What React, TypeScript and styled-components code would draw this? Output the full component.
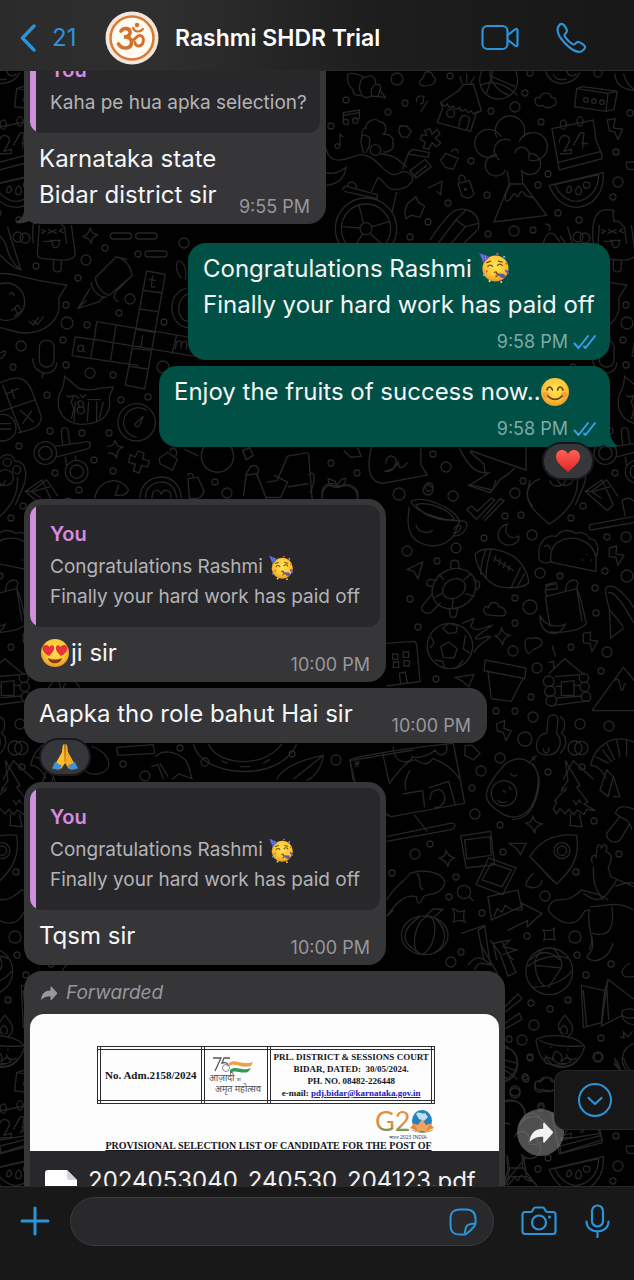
import React, { useLayoutEffect, useRef } from "react";
import styled, { createGlobalStyle, css } from "styled-components";

const blue = "#2d93d9";
const sans = `Inter, "Liberation Sans", sans-serif`;
const serif = `"Liberation Serif", serif`;

const GlobalStyle = createGlobalStyle`
  *, *::before, *::after { box-sizing: border-box; }
  html, body { margin: 0; padding: 0; background: #010101; }
  body { font-family: ${sans}; color: #f4f4f6; }
  button { border: 0; padding: 0; background: none; color: inherit; font: inherit; cursor: pointer; }
  svg { display: block; flex: none; }
`;

const Screen = styled.div`
  display: flex;
  flex-direction: column;
  height: 100vh;
  overflow: hidden;
`;

/* ---------- header ---------- */

const Header = styled.header`
  display: flex;
  align-items: center;
  flex: none;
  height: 71px;
  padding: 6px 47px 0 20px;
  background: linear-gradient(90deg, #2b2b2b 0%, #2f2f2f 25%, #1d1d1d 60%, #171717 100%);
  border-bottom: 1px solid #2a2a2a;
`;

const BackButton = styled.button`
  display: flex;
  align-items: center;
  gap: 16px;
  width: 85px;
  color: ${blue};
  font-size: 24px;
  line-height: 30px;
`;

const ContactName = styled.h1`
  flex: 1;
  min-width: 0;
  margin: 0 0 0 16px;
  color: #fff;
  font-size: 23px;
  font-weight: 600;
  line-height: 30px;
  white-space: nowrap;
`;

const HeaderActions = styled.div`
  display: flex;
  align-items: center;
  gap: 36px;
  color: ${blue};
`;

/* ---------- conversation ---------- */

const Conversation = styled.main`
  position: relative;
  flex: 1;
  min-height: 0;
`;

const WallpaperLayer = styled.div`
  position: absolute;
  inset: 0;
  overflow: hidden;
  background: #010101;
`;

const ThreadScroller = styled.div`
  position: relative;
  height: 100%;
  overflow-y: auto;
  scrollbar-width: none;
  &::-webkit-scrollbar { display: none; }
`;

const Thread = styled.div`
  display: flex;
  flex-direction: column;
  gap: 6px;
  padding: 12px 24px 16px;
`;

const Bubble = styled.article<{ $out?: boolean; $width: number; $space?: number }>`
  position: relative;
  width: min(${(p) => p.$width}px, 100%);
  margin-top: ${(p) => p.$space ?? 0}px;
  align-self: ${(p) => (p.$out ? "flex-end" : "flex-start")};
  background: ${(p) => (p.$out ? "#015045" : "#363638")};
  border-radius: 18px;
`;

const Quote = styled.blockquote`
  position: relative;
  margin: 0;
  padding: 14px 16px 15px 20px;
  overflow: hidden;
  border-radius: 12px;
  background: #28282a;
  color: #b3b3b7;
  font-size: 19px;
  line-height: 30px;
  white-space: nowrap;
  &::before {
    content: "";
    position: absolute;
    inset: 0 auto 0 0;
    width: 6px;
    background: #cf8fdc;
  }
`;

const QuoteFrame = styled.div`
  padding: 6px 6px 0;
`;

const QuoteAuthor = styled.strong`
  display: block;
  margin-bottom: 3px;
  color: #d88ae0;
  font-size: 20px;
  font-weight: 600;
`;

const Line = styled.span`
  display: flex;
  align-items: center;
  gap: 6px;
`;

const Body = styled.div<{ $out?: boolean }>`
  display: flex;
  flex-direction: ${(p) => (p.$out ? "column" : "row")};
  align-items: ${(p) => (p.$out ? "stretch" : "flex-end")};
  justify-content: space-between;
  padding: 8px 16px ${(p) => (p.$out ? 6 : 5)}px 15px;
`;

const Text = styled.p`
  margin: 0 0 6px;
  color: #f5f5f7;
  font-size: 24px;
  line-height: 36px;
  white-space: nowrap;
`;

const Meta = styled.div<{ $out?: boolean }>`
  display: flex;
  align-items: center;
  justify-content: flex-end;
  gap: 5px;
  color: ${(p) => (p.$out ? "#7fa9a1" : "#97979c")};
  font-size: 18px;
  line-height: 24px;
  white-space: nowrap;
  ${(p) => p.$out && css`margin: 1px -3px 0 0;`}
`;

const Reaction = styled.button<{ $out?: boolean }>`
  position: absolute;
  bottom: -33px;
  ${(p) => (p.$out ? "right: 16px;" : "left: 15px;")}
  display: flex;
  align-items: center;
  justify-content: center;
  width: 52px;
  height: 38px;
  border: 2px solid #17191c;
  border-radius: 19px;
  background: #36373b;
`;

const Tail = styled.svg<{ $out?: boolean }>`
  position: absolute;
  bottom: 0;
  ${(p) => (p.$out ? "right: -8px;" : "left: -9px;")}
`;

/* ---------- forwarded document ---------- */

const Forwarded = styled.div`
  display: flex;
  align-items: center;
  gap: 7px;
  padding: 7px 15px 6px;
  color: #97979c;
  font-size: 19px;
  font-style: italic;
  line-height: 30px;
`;

const DocumentCard = styled.div`
  margin: 0 6px 6px;
  overflow: hidden;
  border-radius: 14px;
  background: #28282a;
`;

const Preview = styled.div`
  display: flex;
  flex-direction: column;
  height: 137px;
  padding: 32px 64px 0 67px;
  overflow: hidden;
  background: #fdfdfd;
  color: #15151c;
  font-family: ${serif};
  font-weight: 700;
`;

const Letterhead = styled.table`
  width: 100%;
  height: 58px;
  table-layout: fixed;
  border-collapse: collapse;
  font-size: 9px;
  line-height: 12px;
  text-align: center;
  white-space: nowrap;
  td {
    padding: 0;
    border: 4px double #2c2c33;
  }
  a { color: #1717c4; }
`;

const ReferenceCell = styled.td`
  font-size: 11px;
`;

const LogoCell = styled.td`
  svg { margin: 0 auto; }
`;

const PreviewLogoRow = styled.div`
  display: flex;
  justify-content: flex-end;
  padding-top: 4px;
`;

const PreviewTitle = styled.div`
  margin-left: 5px;
  font-size: 10px;
  line-height: 10px;
  text-align: center;
  text-decoration: underline;
  white-space: nowrap;
`;

const FileRow = styled.a`
  display: flex;
  align-items: flex-start;
  gap: 11px;
  padding: 14px 15px 24px;
  color: #f1f1f3;
  font-size: 24px;
  line-height: 32px;
  text-decoration: none;
  white-space: nowrap;
`;

const ForwardButton = styled.button`
  position: absolute;
  right: -59px;
  top: 138px;
  display: flex;
  align-items: center;
  justify-content: center;
  width: 47px;
  height: 47px;
  border-radius: 50%;
  background: rgba(130, 130, 130, 0.6);
  color: #f2f2f2;
`;

const ScrollDown = styled.button`
  position: absolute;
  right: 0;
  bottom: 56px;
  display: flex;
  align-items: center;
  justify-content: center;
  width: 80px;
  height: 60px;
  border: 1px solid #262626;
  border-right: 0;
  border-radius: 12px 0 0 12px;
  background: #171717;
  color: ${blue};
`;

/* ---------- composer ---------- */

const Composer = styled.form`
  display: flex;
  align-items: flex-start;
  flex: none;
  height: 94px;
  padding: 10px 24px 0 20px;
  border-top: 1px solid #272727;
  background: #181818;
  color: ${blue};
`;

const ComposerButton = styled.button`
  display: flex;
  align-items: center;
  justify-content: center;
  height: 48px;
`;

const InputPill = styled.div`
  display: flex;
  align-items: center;
  flex: 1;
  min-width: 0;
  height: 49px;
  margin: 0 27px 0 20px;
  padding: 0 16px 0 20px;
  border: 1px solid #3a3a3c;
  border-radius: 25px;
  background: #29292b;
`;

const MessageInput = styled.input`
  flex: 1;
  min-width: 0;
  border: 0;
  outline: 0;
  background: transparent;
  color: #fff;
  font: 24px/30px ${sans};
`;

const ComposerActions = styled.div`
  display: flex;
  gap: 28px;
`;

/* ---------- emoji drawings ---------- */

const InlineEmoji = styled.svg`
  display: inline-block;
  vertical-align: -6px;
  overflow: visible;
`;

const FaceGradient = ({ id }: { id: string }) => (
  <defs>
    <radialGradient id={id} cx="50%" cy="40%" r="60%">
      <stop offset="0" stopColor="#ffe658" />
      <stop offset="0.65" stopColor="#fbc735" />
      <stop offset="1" stopColor="#e8952a" />
    </radialGradient>
  </defs>
);

const PartyFace = ({ size, id }: { size: number; id: string }) => (
  <InlineEmoji width={size} height={size} viewBox="0 0 32 32" role="img" aria-label="partying face">
    <FaceGradient id={id} />
    <circle cx="17" cy="17" r="13.5" fill={`url(#${id})`} />
    <path d="M0 1l11 4-6.500 6.500z" fill="#6a4fc0" />
    <path d="M3 2l1.500 6M6.500 3.500l.500 5" stroke="#3fa9e8" strokeWidth="1" />
    <path d="M9 15c1.200-2 4-2 5 0M19 14c1.200-2 4-2 5 0M8 11l4-1.500M20 9.500l4 1" stroke="#7a4a12" strokeWidth="1.300" fill="none" strokeLinecap="round" />
    <path d="M16 21c2-1 3 0 2 1.500 2 0 2 2-.500 3" stroke="#7a4a12" strokeWidth="1.300" fill="none" strokeLinecap="round" />
    <path d="M19 22l6 .500 3 2.500-2 2-3-.500-4-3z" fill="#6555b0" />
    <path d="M27 19a4 4 0 0 1 3 4" stroke="#6555b0" strokeWidth="2" fill="none" />
    <g fill="#f0523f">
      <circle cx="19" cy="2" r="1.200" />
      <circle cx="8" cy="20" r="1.100" />
      <circle cx="28" cy="12" r="1" />
    </g>
    <g fill="#58b8f2">
      <circle cx="26" cy="5" r="1.200" />
      <circle cx="5" cy="24" r="1.100" />
    </g>
    <g fill="#ffd84a">
      <circle cx="11" cy="30" r="1.200" />
      <circle cx="23" cy="31" r="1.100" />
    </g>
  </InlineEmoji>
);

const SmilingFace = () => (
  <InlineEmoji width="28" height="28" viewBox="0 0 28 28" role="img" aria-label="smiling face">
    <FaceGradient id="smile-face" />
    <circle cx="14" cy="14" r="14" fill="url(#smile-face)" />
    <circle cx="5" cy="17" r="3" fill="#f08a3c" opacity=".6" />
    <circle cx="23" cy="17" r="3" fill="#f08a3c" opacity=".6" />
    <path d="M6 12c1-4 4-4 5.500 0M16.500 12c1-4 4-4 5.500 0M7 18c3.500 4.500 10.500 4.500 14 0" stroke="#6d4311" strokeWidth="1.700" fill="none" strokeLinecap="round" />
  </InlineEmoji>
);

const HeartEyes = () => (
  <InlineEmoji width="32" height="28" viewBox="-1 0 32 28" role="img" aria-label="heart eyes">
    <FaceGradient id="heart-face" />
    <circle cx="15" cy="14" r="14" fill="url(#heart-face)" />
    <path d="M9 17c-8-4-8-11-3-11 2 0 3 1 3.500 2C11 6 13 5.500 14 8c1 3-2 6-5 9zM21 17c8-4 8-11 3-11-2 0-3 1-3.500 2C19 6 17 5.500 16 8c-1 3 2 6 5 9z" fill="#e8333c" />
    <path d="M8 19c4 2 10 2 14 0-1 7-13 7-14 0z" fill="#7a3d12" />
  </InlineEmoji>
);

const Heart = () => (
  <svg width="26" height="24" viewBox="0 0 26 24" role="img" aria-label="red heart">
    <defs>
      <linearGradient id="heart-red" x1="0" y1="0" x2="0" y2="1">
        <stop offset="0" stopColor="#ff6152" />
        <stop offset="1" stopColor="#e02626" />
      </linearGradient>
    </defs>
    <path d="M13 23C6 17 1 13 1 7.500 1 3.500 4 1 7 1c3 0 5 2 6 4 1-2 3-4 6-4 3 0 6 2.500 6 6.500C25 13 20 17 13 23z" fill="url(#heart-red)" />
  </svg>
);

const FoldedHands = () => (
  <svg width="28" height="28" viewBox="0 0 28 28" role="img" aria-label="folded hands">
    <path d="M13.500 1c-2 0-2 4-2.500 8L6 18l-2 4 6 4 4-6z" fill="#fdbf2d" />
    <path d="M14.500 1c2 0 2 4 2.500 8l5 9 2 4-6 4-4-6z" fill="#f5ab22" />
    <path d="M14 2v17" stroke="#c77d12" strokeWidth="1" />
    <path d="M4 19l7 3.500L8 27l-7-1.500zM24 19l-7 3.500 3 4.500 7-1.500z" fill="#3f93d8" />
  </svg>
);

/* ---------- icons ---------- */

const stroke = { fill: "none", stroke: "currentColor", strokeLinecap: "round", strokeLinejoin: "round" } as const;

const ForwardArrow = ({ width, height }: { width: number; height: number }) => (
  <svg width={width} height={height} viewBox="0 0 22 20" aria-hidden>
    <path d="M13 1.500v4.500C6 6 1 10 0.500 18.500 4 14.500 8 13.500 13 13.500V18c0 1 .8 1.200 1.500.500l7-8c.600-.700.600-1.300 0-2l-7-7.500C13.800.300 13 .500 13 1.500z" fill="currentColor" />
  </svg>
);

const Ticks = () => (
  <svg width="24" height="16" viewBox="0 0 24 16" role="img" aria-label="Read">
    <path {...stroke} stroke="#3a9fe6" strokeWidth="2" d="M1.500 9.500l4 4.500L15 2M11 12.500l1.500 1.500L22 2" />
  </svg>
);

const Avatar = () => (
  <svg width="54" height="54" viewBox="0 0 54 54" role="img" aria-label="Contact photo">
    <circle cx="27" cy="27" r="26.500" fill="#f3e6dc" />
    <circle cx="27" cy="27" r="21.500" fill="#fffaf2" stroke="#d97a35" strokeWidth="2.500" />
    <g fill="none" stroke="#d4702a" strokeLinecap="round">
      <path strokeWidth="3.600" d="M16 20c3-4 9.500-3 9 2-.500 3-3.500 4-6 4 4-.500 8 1.500 7.500 6-.500 6-9 7-13 1" />
      <path strokeWidth="2.800" d="M26 29c4 2 5-5 9-4.500 5 .500 4.500 10-1.500 10.500-2 0-3.500-1.500-3.500-3.500" />
      <path strokeWidth="2.200" d="M28 17c2 4.500 7 4.500 10 1" />
    </g>
    <circle cx="32" cy="14" r="2.200" fill="#d4702a" />
  </svg>
);

const AzadiLogo = () => (
  <svg width="56" height="42" viewBox="0 0 56 42" role="img" aria-label="Azadi ka Amrit Mahotsav">
    <path d="M5 4h8L7 17M22 4h-6l-2 5c4-1 6 0 6 3" fill="none" stroke="#55555c" strokeWidth="1.300" />
    <path d="M21 9c6-5 12 3 24-1l-2 4c-10 3-15-4-22 0z" fill="#f0a045" />
    <path d="M22 16c6-5 11 2 21-2l-3 4c-8 2-12-3-18 1z" fill="#2e9c58" />
    <circle cx="18" cy="14" r="3.500" fill="none" stroke="#8b8b94" strokeWidth="1" />
    <g fill="#4c4c52" fontFamily={`"Noto Sans", "Noto Sans Devanagari", sans-serif`} fontWeight="400">
      <text x="1" y="27" fontSize="9">आज़ादी <tspan fontSize="4">का</tspan></text>
      <text x="7" y="38" fontSize="9">अमृत महोत्सव</text>
    </g>
  </svg>
);

const G20Logo = () => (
  <svg width="60" height="33" viewBox="0 0 60 33" role="img" aria-label="G20">
    <defs>
      <linearGradient id="g20-fill" x1="0" y1="0" x2="0" y2="1">
        <stop offset="0.250" stopColor="#ee8d3c" />
        <stop offset="0.600" stopColor="#d98f40" />
        <stop offset="0.950" stopColor="#3d9a55" />
      </linearGradient>
    </defs>
    <text x="0" y="23" fontSize="27" fontWeight="400" fontFamily="Lato, sans-serif" fill="url(#g20-fill)">G2</text>
    <ellipse cx="47" cy="13" rx="10" ry="11" fill="#2681bf" />
    <path d="M41 6c3-4 6 1 9-1l3 4-4 4-5-2z" fill="#bfe0ee" />
    <path d="M47 11l4 6 6-2-3 8H40l-3-8 6 2z" fill="#f3a25b" />
    <path d="M39 16l4 7-8-3zM55 16l-4 7 8-3z" fill="#e8853a" />
    <path d="M35 21c7 4 17 4 24 0-5 5-18 5-24 0z" fill="#4b8c4a" />
    <text x="14" y="31" fontSize="5" fontWeight="400" fontFamily={`"Noto Sans", sans-serif`} fill="#2b3a78">भारत 2023 INDIA</text>
  </svg>
);

/* ---------- wallpaper ---------- */

const TILE_W = 560;
const TILE_H = 984;

const dots: [number, number, number][] = [
  [346, 100, 3], [388, 112, 3], [397, 79, 6], [405, 103, 3], [450, 76, 3], [491, 111, 3], [515, 107, 5], [525, 93, 3],
  [541, 122, 3], [530, 73, 3], [598, 73, 4], [471, 161, 3], [487, 195, 3], [448, 203, 3], [428, 222, 3], [548, 174, 3],
  [538, 185, 3], [558, 213, 3], [579, 220, 3], [488, 234, 3], [514, 231, 5], [533, 230, 3], [578, 237, 5], [613, 197, 3],
  [618, 182, 5], [616, 152, 3], [630, 113, 3], [331, 126, 3], [410, 237, 3],
  [25, 238, 5], [36, 266, 3], [86, 260, 5], [105, 248, 3], [138, 254, 3], [184, 243, 5], [78, 278, 3], [130, 299, 5],
  [119, 313, 3], [66, 305, 3], [67, 323, 6], [87, 325, 3], [164, 322, 3], [63, 340, 3], [21, 346, 5], [13, 367, 3],
  [66, 365, 3], [90, 373, 5], [113, 375, 3], [47, 395, 3], [121, 400, 3], [148, 397, 3], [163, 367, 6], [50, 431, 3],
  [82, 433, 3], [109, 433, 3], [19, 446, 3], [94, 460, 3], [55, 473, 3], [113, 471, 3], [79, 490, 3],
  [331, 463, 3], [357, 473, 3], [215, 482, 3], [227, 493, 5], [433, 454, 3], [446, 467, 5], [428, 490, 5], [523, 481, 3],
  [399, 494, 6], [429, 487, 4], [453, 496, 5], [515, 493, 5], [505, 516, 3], [521, 515, 3], [532, 535, 5], [484, 538, 3],
  [571, 518, 3], [583, 506, 3], [607, 537, 3], [626, 537, 5], [456, 548, 5], [407, 551, 5], [437, 561, 3], [540, 573, 5],
  [560, 576, 3], [605, 571, 3], [627, 576, 6], [595, 588, 3], [596, 613, 3], [410, 599, 3], [515, 598, 3], [530, 607, 7],
  [515, 623, 3], [418, 627, 3], [513, 651, 5], [571, 647, 3], [607, 652, 5], [537, 668, 5], [601, 671, 3], [436, 679, 3],
  [531, 697, 3], [496, 711, 3], [515, 711, 3], [533, 717, 5], [580, 724, 5], [609, 726, 5], [525, 739, 7], [575, 748, 7],
  [582, 767, 3], [548, 772, 3], [500, 758, 5], [481, 771, 5], [472, 788, 3], [475, 814, 5], [500, 825, 3], [594, 821, 3],
  [503, 852, 3], [430, 844, 3], [415, 854, 5], [392, 873, 3], [456, 877, 3], [576, 872, 3], [619, 854, 3], [449, 897, 3],
  [545, 896, 5], [482, 913, 3], [527, 936, 3], [575, 937, 6], [577, 955, 3], [461, 952, 3], [451, 962, 5],
  [586, 975, 3], [611, 964, 3], [531, 1003, 3], [568, 1000, 3], [550, 1009, 3], [534, 1025, 5], [522, 1040, 5],
  [509, 1039, 3], [601, 1038, 3], [598, 1057, 5], [530, 1058, 3], [526, 1079, 3], [515, 1093, 5], [541, 1108, 3],
  [205, 762, 4], [123, 764, 3], [145, 776, 5], [292, 754, 3], [336, 760, 5], [180, 748, 3],
];

const WallpaperTile = () => (
  <g id="wallpaper-tile">
    {dots.map(([x, y, r], i) => (
      <circle key={i} cx={x} cy={y} r={r} />
    ))}
    {/* shell, house, ball, tree, calendar, melon, bicycle */}
    <g transform="translate(320 70) scale(.3333)" strokeWidth="4">
      <path d="M84 12c20-8 40 6 52 10 20-12 34 4 30 22 12-4 20 4 14 18l18 22c-20-8-30-2-44-6-10 8-26 4-30-4-14 6-28-4-24-14-14-12-20-30-16-48zM132 20c-14 12-18 36-8 50M164 44c-8 6-14 20-8 34M180 60l-6 20" />
      <path d="M300 44c-8-14 10-14 12-26-2-18 28-16 26 0 10 4 12 18 0 24-14 6-28 8-38 2zM70 156V128l48-8v28M70 136l48-8" />
      <circle cx="78" cy="156" r="8" /><circle cx="106" cy="152" r="8" /><circle cx="52" cy="228" r="7" />
      <path d="M60 228V192l10 10M290 96c-4-14 10-22 22-16l-4 20-8 2M302 126l22-34" />
      <path d="M430 44l-14 18-54 36 6 16-16 44 100 26 16-54 16-8-24-80zM426 42l-6-24M440 40l0-28M450 42l14-22M364 94c4 22 16 12 18 8 6 16 14 10 18 6 4 16 14 8 18 4 4 16 14 10 18 6 6 14 14 8 18 4 4 14 14 8 20 2M416 172l6-28c6-14 30-6 26 8l-8 28" />
      <circle cx="392" cy="130" r="12" /><circle cx="536" cy="30" r="57" />
      <path d="M512-20c-10 40 10 80 56 96M480 46c40-20 80 0 112 30M516 20l70 30M500 70l20-70" />
      <path d="M646 98c-6-14 8-20 14-14 4-22 36-16 34-2 18 0 20 26 4 26-14 10-26 4-30-2-8 4-20 2-22-8zM770 56l94 14-6 54-94-14zM770 56l18-6 104 14-10 54-24 6M864 70l26-6" />
      <circle cx="798" cy="90" r="7" /><circle cx="822" cy="94" r="7" /><circle cx="846" cy="97" r="7" />
      <path d="M240 168l20 0 14 16-12 18-18-2-8-16zM314 182l16-6 6 16 16-14 8 14-14 12 16 14-12 12-14-12-10 20-16-4 6-18-16-8 6-14 14 2zM862 150l24-4-6 28 28 4-14 30-10-22-16-4z" />
      <circle cx="570" cy="182" r="44" /><circle cx="506" cy="220" r="42" /><circle cx="640" cy="230" r="42" />
      <circle cx="528" cy="286" r="32" /><circle cx="630" cy="282" r="32" />
      <path stroke="none" fill="#010101" d="M530 200h80l20 40-10 60h-70l-20-50z" />
      <path d="M540 270a32 32 0 1 1 32-58M584 250a22 22 0 1 1 40 16M598 215c6-14 16-24 30-26" />
      <path d="M562 304l6 38M606 304l2 36M568 342h42l70 94-158 20zM570 344c-20 40-16 50-6 48 12-4 12-20 20-22 6 2 4 14 12 8 2-8 8-18 14-10 8 14 20 12 30 14" />
      <path d="M696 176l124-26 8 60 18 44v12l-128 34zM712 278l132-34M718 218c0-30 34-26 30-4l-16 30 22-6v12l-34 2M760 226l22-38 10 0-4 34 16-2M790 210l-2 26" />
      <ellipse cx="730" cy="164" rx="9" ry="14" /><ellipse cx="780" cy="154" rx="9" ry="14" />
      <path d="M688 346l162-38c4 60-30 100-80 104-40 0-70-30-82-66zM704 344l132-30c0 46-30 76-66 80-30 0-54-24-66-50zM740 366c0-16 10-20 12-16 8 12-4 22-12 16zM770 374c-8-12 2-24 6-26 10 8 12 22 2 26zM798 356c-14-8-6-22 0-20 16 2 16 16 0 20z" />
      <path d="M130 250c0-14-14-36-4-50-4-20 10-30 14-24-12-14 24-40 40-20 20 0 22 30 8 38 20-4 36 10 30 24 10 20-18 30-28 28M124 198c16-8 30 6 24 18 6 14-10 22-10 34" />
      <circle cx="166" cy="240" r="16" />
      <path d="M18 234c10 60 70 30 100 20 60-4 80 90 130 50 60 10 20 60-30 54-20-4-30-30-44-36l-20 44M180 252c40 0 60 20 80 40M18 308c30 10 50-10 60-16-4 30-20 50-60 54M216 426l14-60" />
      <path d="M248 298l18-50 12-10 50 10-4 14-60-10M270 302l46-34 18 22-46 34zM290 308l-6 8 36-30-6 8M362 270l16-20 36 16-14 32-24-6zM394 246c4-14 22-10 20 4" />
      <path d="M66 360l10-12 96 26v12l-100-22M82 350c2-20 26-18 28 6" />
      <circle cx="138" cy="476" r="92" /><circle cx="138" cy="476" r="74" /><circle cx="138" cy="476" r="18" />
      <path d="M130 458l-14-56M156 470l54-16M150 490l50 46M128 492l-30 46M120 474l-54-4M324 354l42-20-4 40-12-10M414 340l34-8 14 40c-14 20-28 10-36 6zM418 336c-8-26 18-26 18-6M262 402l26-22 8 18 18 10-14 34-26-6-16 10-4-20z" />
      <circle cx="436" cy="358" r="3" />
      <path d="M330 510c60-90 80-100 112-90 30 8 40 40 32 58l-60 60M354 520l54-70 28 20-50 60M408 450l30-30M436 470l40-10M820 520c-10-90 20-110 62-98-10 20 4 20 0 32 20-4 20 10 32 18l6 50M844 478l12 6-12 6M890 478l-12 6 12 6M850 514h30M670 520c10-40 30-40 50-4l-14-20M676 462c16 0 16 12 10 20M884 10c6 50 40 46 60 52M910 10c8 30 20 40 36 50M676 4c20 50 80 46 104 4M700 10c4 20 20 20 40 18M740 0c0 16 20 24 30 10M920 276h24v22h-18c-8-6-8-16-6-22z" />
    </g>
    {/* ice lolly, pen, crossword, cat, clock, scissors */}
    <g transform="translate(0 225) scale(.3333)" strokeWidth="4">
      <path d="M118 0l-6 86c0 16 14 14 50 18 40 4 58 0 64-14l-12-90M160 104v26c0 14 24 14 24 0v-26M144 12l12 8-14 6M190 10l-12 8 14 6M150 46h32M156 48c0 28 22 26 22 0" />
      <path d="M248 34c16 0 20-16 22-26 4 14 8 18 24 22-16 4-18 10-20 24-6-12-10-14-26-20zM340 24h46c12 0 12 18 0 18h-46c-12 0-12-18 0-18zM416 24h46c12 0 12 18 0 18h-46c-12 0-12-18 0-18zM444 78h48c12 0 12 18 0 18h-48c-12 0-12-18 0-18z" />
      <path d="M0 34c30 20 10 60 62 100-10-40-20-60-40-130M0 90c20 20 40 40 62 44M0 146c40-6 80 20 200 34-10 20-22 30-24 44 10 60-40 100-100 100-30 0-60-14-76-16" />
      <circle cx="18" cy="230" r="56" /><path d="M28 210c4-10 12-10 16 4M34 258l20-18 12 18-24 16M44 250l10 18M86 288l14 12 16-24M98 286l14 12 20-24" />
      <path d="M286 158l62-62c24 2 46 28 48 56l-70 60c-20-8-38-30-40-54zM276 172c-10 10 20 50 44 44M270 190l-36 60 64-20 12-14M234 250l26-26M362 98l20 6M398 150l-50 50c-10 10-4 30 8 28" />
      <path d="M440 138l56 10-62 344-58-12zM430 196l56 8M418 252l56 8M410 314l54 8M398 370l54 6M388 424l54 8M290 290l300 50M286 344l300 50M290 290l-8 60M226 336l60 8M226 336l-10 56 200 30M280 350l-8 50M348 300l-16 106M530 330l-14 58" />
      <path d="M458 152l-4 30c0 6 8 6 12 2M446 164l22 2M428 330l-4 32c-2 6-10 4-10 0M250 362c-20-8-22 20-8 18 10-2 10-18 8-18 0 10-2 18 6 18M530 348l-4 24M528 356c10-16 20-10 14 16M544 356c10-14 22-10 14 18" />
      <path d="M546 160c-22-20-20-56-6-52 18 10 20 40 16 56M560 190c-60 10-60 110 4 118M566 206c-40 14-40 80 0 84" />
      <rect x="118" y="346" width="44" height="80" rx="20" /><path d="M98 400c0 54 72 60 72 12M130 444l-4 16M0 402c20-10 16-24 14-24L0 384" />
      <path d="M0 474c60-30 80-10 94 20l30 80c0 40-40 40-70 50M8 480l54 140M0 560l108-36M34 492l10 30M56 490l-40 18M60 556l42 36M96 556l-28 40" />
      <circle cx="8" cy="608" r="40" /><path d="M0 596h34M0 612h34" />
      <path d="M194 454l42 36c20 6 46 6 60 0l44-4-12 30c10 60-30 80-84 82-50-2-80-40-66-90 8-10 14-30 16-54zM198 510l8 6 14-4-6 20 8 20-8 30M222 510l16 10M226 530l-4 60M266 530l-4 60M290 530v60M310 530l-12 50M262 524h40M240 508l8 10 10-10M236 530c10-10 20 10 10 16 10 0 10 22-4 20-14-2-14-20 0-20-10-4-12-14-6-16z" />
      <circle cx="410" cy="592" r="56" /><path d="M440 556a44 44 0 1 0-30 80M404 598l26-24-12 28c-6 6-14 2-14-4z" />
      <circle cx="136" cy="684" r="34" /><circle cx="136" cy="684" r="20" /><circle cx="230" cy="740" r="34" /><circle cx="230" cy="740" r="20" />
      <path d="M166 664l96-14c12 0 12 18 0 22l-92 24M184 620c0-16 20-16 20 0l6 40M188 660l-4-40M196 696l4 30M226 692l2 14M320 664c20 2 24-8 24-18 6 14 10 20 26 20-18 6-18 14-20 32-8-14-14-14-26-14M390 690l16 6 8-18 18 6-4 18 20 6-6 18-18-4-6 22-18-6 6-20-20-6zM478 700l24-18 30 20-14 34-38-20zM510 680c0-14 18-14 20 2l-2 12" />
      <path d="M0 700c20-20 40-10 44 8 40 0 40 50 20 90L46 840M94 800l46-36 34 50M94 800l30 20" />
      <circle cx="22" cy="712" r="12" /><circle cx="50" cy="734" r="12" /><circle cx="16" cy="758" r="24" />
      <path d="M284 820c10-60 80-70 102-24-10 20-30 16-40 14l10-30M420 820c0-80 120-90 124 0M436 820c0-60 90-70 94 0M456 820c0-30 20-30 28-12 8-20 32-14 28 12" />
    </g>
    {/* apple, picture cards and bottles between the bubbles */}
    <g transform="translate(0 440) scale(.3507)" strokeWidth="4">
      <path d="M536 110l28-4 18 40c-8 24-24 22-42 20zM536 104c-2-12 14-12 16 2M692 30l20-8 10 22-20 12zM700 100l14-24c20-10 30 10 18 22l28 70M694 160l8-60 30-4M760 120l30-4 30-70 60-10M780 100l40 20-20 44h-40M880 40l10 130M820 134l60-10M880 100c20-20 20 20 4 50M920 186c-10-50 20-70 44-50 40-20 70 20 50 50M962 134l-6-16-20-8c0 20 10 26 26 24 6-20 16-26 24-24 0 14-8 22-24 24" />
      <circle cx="620" cy="46" r="46" />
      <path d="M526 26l40 20M1060 20c-20 70 0 100 30 104l128-24-18-30v-46M1100 68c0-40 50-20 20 14l-24 8c20 2 30-10 40-26 0 30 20 8 26 0M1310 24c30 60 50 70 84 70l-56 36 60 20 30-40c20-10 30-20 40-30M1340 30l160 56v-66M1340 34l40 34 4 30M1540 110c-50 20-40 60-20 80M980 30l20 20 30-4-10-24" />
    </g>
    {/* hammer, buoy, leaf and tools in the gap under the reaction */}
    <g transform="translate(0 490) scale(.3333)" strokeWidth="4">
      <path d="M10 868l30-56 60 56M274 770c40 10 70 50 40 74-20 14-50 10-60-4M350 772l110-8 4 26-110 6zM454 830l20-6 16 44M466 800c20-20 60-20 90 10 14 20 14 40 20 56l-40-14-20 16M480 820l24 40M580 762c20 100 260 120 310 0M626 762c20 60 160 80 220 0M664 812l20 8M720 830h30M790 820l20-12M830 868c20-40 80-60 140-72-4 30-20 60-50 76M880 868l90-72M1050 812l190-32M1050 812l10 60M1066 820l10 10M1078 818l-12 14" />
      <circle cx="64" cy="774" r="20" />
      <path d="M0 680c16 10 20 30 4 50 16 10 20 40-4 60" />
    </g>
    {/* cup, turtle, taco, football, cabin, avocado, rocket and friends */}
    <g transform="translate(320 480) scale(.3333)" strokeWidth="4">
      <path d="M268 80c-10 60-6 110 70 118 60-4 70-40 80-76-40 0-130-20-146-58 40-20 130 20 146 58M288 74c30-10 100 10 114 44-40 10-100-14-114-44zM418 124c24-6 30 12 14 30-10 12-20 14-32 14M402 150c6-20 28-16 18-2-6 10-14 14-20 10M288 134c4 26 40 28 50 16" />
      <path d="M440 88l14-10 18 16 42-40 10 6-54 58zM488 116l52-60 12 6-58 60M622 40c0 40 30 60 66 92 50-30 90-80 84-140M622 40c0-10 4-20 8-40M690 0c0 26 46 24 46 0M796 34l50-34 34 74-18 18zM796 34l26 0 48-14M810 134l130-24M812 150l130-22M810 134c-4 6-2 14 2 16M906 60l20-6 20 10M906 60l10 50M556 134c-40 20-20 70 20 60 20-6 22-18 20-26-20 14-50-4-34-36zM8 50c-10-40 30-50 50-30 40-20 70 20 50 40M444 14l74 16 10-30" />
      <path d="M466 222c30-30 100-10 130 20 20 20 30 50 30 66-20 20-90 20-110 2-30-20-50-60-50-88zM498 208c-8 20-16 50-16 76M514 206c-10 30-16 60-16 92M614 280l-24 44M602 262l-28 60M520 234l60 38M528 226l-6 20M542 236l-6 20M556 246l-6 18M570 256l-6 18" />
      <path d="M658 240c-10-60 30-80 50-70 20-30 50-16 60-10 20-10 40 10 40 16 30 0 28 40 20 54l0 44-130-26c-10 0-10-50 20-64 30-20 100-10 110 50M658 240c20 20 30 0 40 6M672 200c10-10 20 0 20 10M786 240h4M800 224h4M812 240h4M868 204l22-6-2 24 24 4-18 30-6-24-20-2zM262 268l46-22-14 50-12-22z" />
      <ellipse cx="402" cy="326" rx="68" ry="58" transform="rotate(-30 402 326)" /><ellipse cx="402" cy="326" rx="36" ry="28" transform="rotate(-30 402 326)" />
      <path d="M392 268v-16c0-16 24-14 24 0l2 16M460 300c30 0 20 30 4 30M388 386l2 18c2 14 20 10 20-6l4-16M338 340l-30 36c-10 16 10 30 26 20l28-28M340 320c-30 0-20-20-8-22l20 4M372 300l-16-18M432 300l20-18M436 340l28 10M400 356l-4 30M366 340l-24 14" />
      <path d="M492 396c-4-14 8-20 14-14 4-22 32-16 30-2 18 0 24 18 18 26-20 4-40 0-54-2zM676 350l94-24c20 40 20 80 30 104-20 24-80 30-110 26M676 350l14 90M684 350c-20-20 0-40 20-36M678 314l30-6 4 18-32 4zM770 324c14-30-20-30-30-10l-4 20M770 324l16 100M660 406c10 30 50 40 76 26-20 50-80 30-76-26zM858 324c20-20 60 20 84 60M858 324c-4 20 4 40 10 60l4 90 40-30M864 340c10-10 30 4 78 90M870 390l40 50M526 468c16-4 16-12 18-24 6 14 10 18 26 22-18 6-20 14-22 30-4-14-8-20-22-28z" />
      <circle cx="390" cy="498" r="68" /><path d="M362 500l24-14 26 20-10 28-32-2zM384 460l-16-16 20-14 24 8-4 20zM334 470l8 20-12 14M344 540l24 4 6 20M430 540l-20 24M450 520l-20-14 6-40M426 430l36-14-10 24c20 20 40 0 64-4-24 20-50 30-50 40 20 4 30-10 46-6-20 20-40 24-50 48" />
      <path d="M616 484c6-20 20-2 24-10 20-4 30 10 24 20-6 14-20 4-36 26-10 0-14-20-12-36zM790 460l22-4-2 24 24 4-18 30-6-24-20-2zM496 540l122 24-4 32-122-24zM504 576l10 80 60 8 36-70M198 490l84-6c10 0 8 14 18 120l-100 14M218 522h16v16h-16zM250 516h16v16h-16zM220 546h16v16h-16zM252 542h16v16h-16zM242 610l-4-30 18-4 6 34" />
      <path d="M686 582l48-46 60 50M686 548l14-4 2 20M704 530c10-10-14-20-4-34M724 606l38-4v44h-38zM704 590l76-6M706 620l18-2M762 616h18M708 654l78-6M700 676l110-14M406 592l56-8-16 36-18-16zM530 732l24-10-2 24 22 6-16 30-8-24-18-6z" />
      <circle cx="686" cy="604" r="16" /><circle cx="690" cy="634" r="16" /><circle cx="694" cy="662" r="16" /><circle cx="792" cy="594" r="14" /><circle cx="794" cy="620" r="14" /><circle cx="798" cy="650" r="14" />
      <path d="M816 692l94-130 50 60M816 692h130M884 602c20-20 14 40 24 28 6-10 0-18 10-20M660 820c-20-10-10-60 20-60l4-40c0-20 30-20 30 0l-4 40c20 20 10 60-20 64-10 2-20 0-30-4zM650 826l-20 20M636 830l10 12M672 806a8 8 0 1 0 12-2" />
      <path d="M542 868c20-30 60-40 80-24 40 20 40 60 20 120-20 50-70 60-106 30-50-30-50-60 6-126zM638 850c30 40 20 90 0 130-10 24-40 40-60 38" /><circle cx="552" cy="940" r="38" />
      <path d="M548 930l10 8M566 920l8 10M532 960c10 10 20 10 30 4M572 880c4 10 14 10 20 4M736 842l44 74-10 6 34 44-12 6 34 20-26-4-8 16-20-14-10 14-16-16-10 14-16-16-10 16-10-16 10-20-6-4 24-26-4-4 20-30zM752 1000l-2 36 36 4-8-38M724 920l10 14 6-12M760 960l8 14 10-14 6 10" />
      <path d="M942 786c-70-30-120 20-130 70 20 0 40 20 46 40M846 808l30 38M860 790l24 50M890 780l10 50M920 780v50M826 830l40 20M850 900l-10 30 24 20 16-60-20-20zM880 890l20 60-20 0M886 1000c10-30 40-20 60-10M886 1000c20 20 40 10 50 50M900 1010l-40 50c0 30 30 30 40 20l30-50M618 1030c16-4 18-8 20-20 6 14 12 18 28 22-18 6-20 14-22 28-4-16-10-20-26-30z" />
      <path d="M90 840c10-10 200-40 310-50l34 180-220 40c-20-6-20-20-20-20M90 840l20 90M188 820l20 90c60-80 70-70 80-70 30 20 40 10 50-4 30 10 60 30 80 60M270 870c-10 20-20 40-12 60M248 942l60-10 6 50M326 924l60-20 20 70M330 960c0-40 40-40 44-10 4 20-20 40-30 30M282 1004l40 50M200 1070l190-40c20-4 20 14 0 20L200 1084M106 844l10 10M118 842l-14 14M220 800c0 60 60 50 56 30 20 10 60-10 70-20 10 30 50 10 30-20M436 796l20 0 24 24-20 20-26-14z" />
      <path d="M422 1068l90-14 12 100-86 10zM434 1080l76-10 4 56-74 10zM506 1134l82 30-40 80-80-30zM514 1150l60 20-28 50-60-20zM568 1090l50 0-16 34-10-16zM358 1134c16-4 18-8 20-22 6 14 14 20 28 22-20 6-20 14-22 26-4-14-10-16-26-26z" />
      <path d="M630 1130c30-50 80-70 140-64 10 60-10 100-60 146zM640 1140l60 64M640 1180c-20 20-30 40-14 40 20 10 40-4 40-20" /><circle cx="726" cy="1112" r="24" /><circle cx="726" cy="1112" r="14" />
      <path d="M818 1150c-10-20 6-30 10-20l4-30c4-10 12-6 12 4l8-10c10 0 10 10 6 20 20 10 20 20 6 50M820 1160c0 40 0 60 30 100M864 1160l8 30 70 30M886 1220c20-10 40-14 60-10M200 1260c30-50 60-60 70-80 60-20 120 10 100 40-20 30-50 20-60 30-10 30-20 20-20 0-40-10-70 30-90 60M290 1180c20 20 0 40 20 50M200 1310l20-20" />
      <circle cx="432" cy="1236" r="20" /><path d="M448 1250l12 14M504 1250l90-20 10 50-90 40zM522 1310l10-24 14 10 10-20 20 14 30 0 0-20 60 30-44 40 0-18-60 30M410 1290c4 10 20 4 24 0-4 10-4 30 0 36-14-6-20-4-34 0 6-10 4-30-2-40zM670 1350c10 4 28 2 34-6-4 14-4 24 2 36-14-4-20-4-34 0 4-14 4-20-2-30zM684 1290c20-60 40 0 100-60 30 10 60 10 80 30M684 1290c20 30 70 60 100 20 10-20 14-20 24-20-10 60 20 80 0 120M790 1240c40 30 60 30 100-40M810 1280c50 0 80-20 130 10M816 1360c40 10 70 0 60-80" />
      <ellipse cx="314" cy="1366" rx="70" ry="58" /><ellipse cx="314" cy="1366" rx="28" ry="58" transform="rotate(14 314 1366)" /><path d="M300 1310c-60 40-60 80 0 110M340 1310c50 40 40 90 0 110M318 1308l20-20h30c-10 10-20 20-24 20M424 1360l70-24 14 100M494 1340l-20 10 18 90M530 1440l-10-50 50-10-20 20 40 10-30 10 20 20M720 1440c-30-30-60-30-90 0" />
    </g>
    {/* globe, bamboo, flags, lamp */}
    <g transform="translate(440 940) scale(.3333)" strokeWidth="4">
      <circle cx="328" cy="94" r="70" />
      <path d="M262 80c40-30 90-40 124-24M276 142c50 0 100-20 120-50M286 76c0 30 10 50 30 66M308 26c-20 20-26 40-22 50M340 24c20 20 30 50 24 60l-40 60M286 76l80 8M120 10l54 94M150 0l30 40 24 68 24-10-40-90M188 44l20-8M84 76c20-30 40-30 70 0-30-10-40-10-50 14M194 200l40-38 12 14-50 40M194 250l44-30 8 18-50 28M424 136l70 16-10 96-54 14zM430 150l10 110M494 152l10-34 78 60M504 118l-20 140 60-30M500 140l6 100M440 50c20-20 20-30 16-60M440 50c10 20 60 20 80-40M546 214c10-10 40-10 40 0M546 214c-4 30 20 40 40 40M546 226c10 10 30 10 40 6M582 110c-60 10-30-40-10-40" />
      <path d="M288 300c20-20 120-20 146 20-10 40-40 60-70 60-50 0-70-30-76-80zM298 300c30 20 90 20 130 18M370 284c-20-20-20-30 4-58 30 30 30 50 10 64M364 280c-8-8 0-20 8-24 12 8 14 20 4 26M318 370c-10-20 0-24 20-10 0-20 10-30 16-24 14 8 14 20 8 30 20-20 30-16 30 0-20 10-40 14-74 4zM332 318v6M360 314v6M384 326v6M194 324c40 0 60 60 0 100M194 360l40 10M580 310c-40 20-40 60-20 80M540 290l12 4-2-18 14 14 14-16M520 370l20 20M530 360l10 26" />
      <path d="M284 440c0-20 14-20 20-16 10-20 40-10 34 4M284 440c0 20 20 20 30 10l26 4M196 486c40-10 60 10 60 40 40-20 60 20 40 50M256 526c-20 20-20 40 10 60M200 650l6 60-10 20M260 650l-50 60h50l-10-60M210 710l-10 24M260 710l30 24M360 600l120-20M360 640l126-40M358 610l6 32M420 580c10-20 40-20 60-10l6 30" />
    </g>
  </g>
);

const Wallpaper = () => (
  <svg width={TILE_W * 3} height={TILE_H * 2} viewBox={`0 71 ${TILE_W * 3} ${TILE_H * 2}`} fill="none" stroke="#262626" strokeWidth="1.300" aria-hidden>
    <WallpaperTile />
    <use href="#wallpaper-tile" x={-TILE_W} />
    <use href="#wallpaper-tile" x={TILE_W} />
    <use href="#wallpaper-tile" y={TILE_H} />
    <use href="#wallpaper-tile" x={-TILE_W} y={TILE_H} />
  </svg>
);

/* ---------- message parts ---------- */

const QuotedReply = ({ emojiId }: { emojiId: string }) => (
  <QuoteFrame>
    <Quote>
      <QuoteAuthor>You</QuoteAuthor>
      <Line>
        Congratulations Rashmi <PartyFace size={25} id={emojiId} />
      </Line>
      <Line>Finally your hard work has paid off</Line>
    </Quote>
  </QuoteFrame>
);

const Time = ({ children, out }: { children: string; out?: boolean }) => (
  <Meta $out={out}>
    <time>{children}</time>
    {out && <Ticks />}
  </Meta>
);

export default function App() {
  const scroller = useRef<HTMLDivElement>(null);

  useLayoutEffect(() => {
    if (scroller.current) scroller.current.scrollTop = 48;
  }, []);

  return (
    <Screen>
      <GlobalStyle />
      <Header>
        <BackButton aria-label="Back, 21 unread">
          <svg width="16" height="28" viewBox="0 0 16 28" aria-hidden>
            <path {...stroke} strokeWidth="3.400" d="M14 2L2.500 14 14 26" />
          </svg>
          21
        </BackButton>
        <Avatar />
        <ContactName>Rashmi SHDR Trial</ContactName>
        <HeaderActions>
          <button aria-label="Video call">
            <svg width="38" height="28" viewBox="0 0 38 28">
              <g {...stroke} strokeWidth="2.200">
                <rect x="1.500" y="2" width="25" height="23" rx="5" />
                <path d="M27 11l7-5.500c1.500-1.200 2.500-.5 2.500 1v14c0 1.500-1 2.200-2.500 1L27 16" />
              </g>
            </svg>
          </button>
          <button aria-label="Voice call">
            <svg width="32" height="32" viewBox="0 0 32 32">
              <path {...stroke} strokeWidth="2.200" d="M3 5.500C4 3 6 1.500 7.500 2c1.500.500 4 4.500 4.500 6.500.500 2-2.500 3-2.500 4.500 0 2.500 7 9.500 9.500 9.500 1.500 0 2.500-3 4.500-2.500 2 .500 6 3 6.500 4.500.500 1.500-1.500 4-4 5C18 32 0 14 3 5.500z" />
            </svg>
          </button>
        </HeaderActions>
      </Header>

      <Conversation>
        <WallpaperLayer>
          <Wallpaper />
        </WallpaperLayer>
        <ThreadScroller ref={scroller}>
          <Thread>
            <Bubble $width={302}>
              <QuoteFrame>
                <Quote>
                  <QuoteAuthor>You</QuoteAuthor>
                  <Line>Kaha pe hua apka selection?</Line>
                </Quote>
              </QuoteFrame>
              <Body>
                <Text>
                  Karnataka state
                  <br />
                  Bidar district sir
                </Text>
                <Time>9:55 PM</Time>
              </Body>
              <Tail width="22" height="24" viewBox="0 0 22 24" aria-hidden>
                <path d="M9 0v10c0 6-4 10-9 12 5 2 10 1 14-1 3 2 5 3 8 3V0z" fill="#363638" />
              </Tail>
            </Bubble>

            <Bubble $out $width={422} $space={13}>
              <Body $out>
                <Text>
                  Congratulations Rashmi <PartyFace size={31} id="party-sent" />
                  <br />
                  Finally your hard work has paid off
                </Text>
                <Time out>9:58 PM</Time>
              </Body>
            </Bubble>

            <Bubble $out $width={451}>
              <Body $out>
                <Text>
                  Enjoy the fruits of success now..
                  <SmilingFace />
                </Text>
                <Time out>9:58 PM</Time>
              </Body>
              <Tail $out width="20" height="24" viewBox="0 0 20 24" aria-hidden>
                <path d="M12 0v8c0 7 3 12 8 15-5 2-10 1-14-1-2 1-4 2-6 2V8z" fill="#015045" />
              </Tail>
              <Reaction $out aria-label="Reaction: heart">
                <Heart />
              </Reaction>
            </Bubble>

            <Bubble $width={362} $space={46}>
              <QuotedReply emojiId="party-quote-1" />
              <Body>
                <Text>
                  <HeartEyes />
                  ji sir
                </Text>
                <Time>10:00 PM</Time>
              </Body>
            </Bubble>

            <Bubble $width={463}>
              <Body>
                <Text>Aapka tho role bahut Hai sir</Text>
                <Time>10:00 PM</Time>
              </Body>
              <Reaction aria-label="Reaction: folded hands">
                <FoldedHands />
              </Reaction>
            </Bubble>

            <Bubble $width={362} $space={33}>
              <QuotedReply emojiId="party-quote-2" />
              <Body>
                <Text>Tqsm sir</Text>
                <Time>10:00 PM</Time>
              </Body>
            </Bubble>

            <Bubble $width={481}>
              <Forwarded>
                <ForwardArrow width={20} height={15} />
                Forwarded
              </Forwarded>
              <DocumentCard>
                <Preview>
                  <Letterhead>
                    <colgroup>
                      <col width="31%" />
                      <col width="20%" />
                      <col width="49%" />
                    </colgroup>
                    <tbody>
                      <tr>
                        <ReferenceCell>No. Adm.2158/2024</ReferenceCell>
                        <LogoCell>
                          <AzadiLogo />
                        </LogoCell>
                        <td>
                          PRL. DISTRICT &amp; SESSIONS COURT
                          <br />
                          BIDAR, DATED:&nbsp; 30/05/2024.
                          <br />
                          PH. NO. 08482-226448
                          <br />
                          e-mail: <a href="mailto:pdj.bidar@karnataka.gov.in">pdj.bidar@karnataka.gov.in</a>
                        </td>
                      </tr>
                    </tbody>
                  </Letterhead>
                  <PreviewLogoRow>
                    <G20Logo />
                  </PreviewLogoRow>
                  <PreviewTitle>PROVISIONAL SELECTION LIST OF CANDIDATE FOR THE POST OF</PreviewTitle>
                </Preview>
                <FileRow href="#document">
                  <svg width="32" height="40" viewBox="0 0 32 40" aria-hidden>
                    <path d="M3 5h19l10 10v25H0V8c0-2 1-3 3-3z" fill="#fff" />
                    <path d="M22 5v7c0 2 1 3 3 3h7z" fill="#d4d4d8" />
                  </svg>
                  2024053040_240530_204123.pdf
                </FileRow>
              </DocumentCard>
              <ForwardButton aria-label="Forward">
                <ForwardArrow width={24} height={22} />
              </ForwardButton>
            </Bubble>
          </Thread>
        </ThreadScroller>
        <ScrollDown aria-label="Scroll to latest">
          <svg width="36" height="36" viewBox="0 0 36 36">
            <circle {...stroke} strokeWidth="2" cx="18" cy="18" r="16" />
            <path {...stroke} strokeWidth="2.200" d="M11.500 16l6.500 6 6.500-6" />
          </svg>
        </ScrollDown>
      </Conversation>

      <Composer onSubmit={(e) => e.preventDefault()}>
        <ComposerButton type="button" aria-label="Attach">
          <svg width="30" height="30" viewBox="0 0 30 30">
            <path {...stroke} strokeWidth="3" d="M15 2v26M2 15h26" />
          </svg>
        </ComposerButton>
        <InputPill>
          <MessageInput aria-label="Message" />
          <ComposerButton type="button" aria-label="Stickers">
            <svg width="28" height="28" viewBox="0 0 28 28">
              <path {...stroke} strokeWidth="2" d="M16 26.500h-5c-7 0-9.500-3-9.500-9.500v-6c0-7 3-9.500 9.500-9.500h6c6.500 0 9.500 3 9.500 9.500v5c0 2-9 10.500-10.500 10.500zM16 26c0-8 2-10.500 10.500-10.500" />
            </svg>
          </ComposerButton>
        </InputPill>
        <ComposerActions>
          <ComposerButton type="button" aria-label="Camera">
            <svg width="36" height="30" viewBox="0 0 36 30">
              <g {...stroke} strokeWidth="2.200">
                <path d="M4 6h6c2 0 2-4.500 4-4.500h8c2 0 2 4.500 4 4.500h6c1.500 0 2.500 1 2.500 2.500v17c0 1.500-1 2.500-2.500 2.500H4c-1.500 0-2.500-1-2.500-2.500v-17C1.500 7 2.500 6 4 6z" />
                <circle cx="18" cy="16.500" r="7" />
              </g>
              <circle cx="28.500" cy="11" r="1.600" fill="currentColor" />
            </svg>
          </ComposerButton>
          <ComposerButton type="button" aria-label="Voice message">
            <svg width="25" height="34" viewBox="0 0 25 34">
              <g {...stroke} strokeWidth="2.200">
                <rect x="7" y="1.500" width="11" height="21" rx="5.500" />
                <path d="M1.500 17.500c0 13 22 13 22 0M12.500 27.500V33" />
              </g>
            </svg>
          </ComposerButton>
        </ComposerActions>
      </Composer>
    </Screen>
  );
}
